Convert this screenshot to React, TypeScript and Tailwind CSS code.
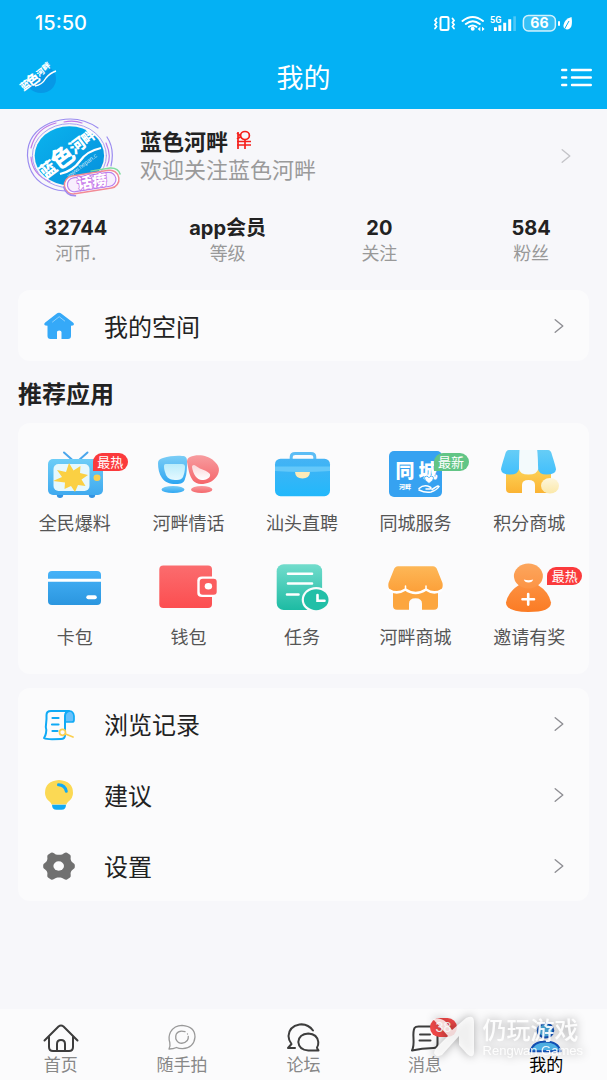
import type { ReactNode } from "react";

type Tile = {
  badge?: "最新" | "最热";
  icon: ReactNode;
  label: string;
};

type Row = {
  icon: ReactNode;
  label: string;
};

const stats = [
  { label: "河币.", value: "32744" },
  { label: "等级", value: "app会员" },
  { label: "关注", value: "20" },
  { label: "粉丝", value: "584" },
];

const tiles: Tile[] = [
  { badge: "最热", icon: <TvIcon />, label: "全民爆料" },
  { icon: <ChairsIcon />, label: "河畔情话" },
  { icon: <BriefcaseIcon />, label: "汕头直聘" },
  { badge: "最新", icon: <CityIcon />, label: "同城服务" },
  { icon: <PointsShopIcon />, label: "积分商城" },
  { icon: <CardIcon />, label: "卡包" },
  { icon: <WalletIcon />, label: "钱包" },
  { icon: <TaskIcon />, label: "任务" },
  { icon: <ShopIcon />, label: "河畔商城" },
  { badge: "最热", icon: <InviteIcon />, label: "邀请有奖" },
];

const rows: Row[] = [
  { icon: <HistoryIcon />, label: "浏览记录" },
  { icon: <BulbIcon />, label: "建议" },
  { icon: <GearIcon />, label: "设置" },
];

const tabs = [
  { icon: <TabHomeIcon />, label: "首页" },
  { icon: <TabSnapIcon />, label: "随手拍" },
  { icon: <TabForumIcon />, label: "论坛" },
  { count: 38, icon: <TabMessageIcon />, label: "消息" },
  { active: true, icon: <TabMeIcon />, label: "我的" },
];

export default function App(): ReactNode {
  return (
    <div className="relative flex min-h-screen flex-col bg-[#f7f7fa] font-['Noto_Sans_CJK_SC',sans-serif] text-[#222]">
      <Header />
      <main className="flex flex-col">
        <Profile />
        <Stats />
        <section className="mx-[18px] mt-[26px] rounded-xl bg-[#fbfbfc]">
          <ListRow row={{ icon: <HouseIcon />, label: "我的空间" }} />
        </section>
        <h2 className="mx-[18px] mt-[14px] text-2xl/9 font-bold">推荐应用</h2>
        <TileGrid />
        <section className="mx-[18px] mt-[14px] rounded-xl bg-[#fbfbfc]">
          {rows.map((row) => (
            <ListRow key={row.label} row={row} />
          ))}
        </section>
      </main>
      <TabBar />
    </div>
  );
}

function Header() {
  return (
    <header className="bg-[#04b1f4] text-white">
      <div className="flex h-[45px] items-center justify-between pr-[33px] pl-[35px]">
        <span className="font-['Inter',sans-serif] text-xl font-medium">
          15:50
        </span>
        <StatusIcons />
      </div>
      <div className="grid h-16 grid-cols-3 items-center px-[15px]">
        <a aria-label="蓝色河畔" href="#home">
          <SmallLogo />
        </a>
        <h1 className="text-center text-[27px]/9">我的</h1>
        <button aria-label="菜单" className="justify-self-end" type="button">
          <svg
            className="h-[19px] w-[31px]"
            fill="none"
            stroke="currentColor"
            strokeLinecap="round"
            strokeWidth="2.4"
            viewBox="0 0 31 19"
          >
            <path d="M1.2 2h4M1.2 9.5h4M1.2 17h4M11 2h18.8M11 9.5h18.8M11 17h18.8" />
          </svg>
        </button>
      </div>
    </header>
  );
}

function Profile() {
  return (
    <a className="flex items-start pt-[9px] pr-9 pl-[26px]" href="#profile">
      <Avatar />
      <div className="grow pt-2 pl-4">
        <div className="flex items-center gap-2">
          <span className="text-[22px]/7 font-bold">蓝色河畔</span>
          <svg
            className="h-5 w-4"
            fill="none"
            stroke="#f5201c"
            strokeWidth="1.7"
            viewBox="0 0 16 20"
          >
            <ellipse cx="9" cy="5.5" rx="4.4" ry="4" />
            <path d="M2 2v17M1 3l3 2.5M1 9l4-2.5M1 11.5h14M1 15h14M9 10v9" />
          </svg>
        </div>
        <div className="text-[22px]/7 text-[#9a9a9a]">欢迎关注蓝色河畔</div>
      </div>
      <Chevron className="mt-[30px] text-[#c4c4c8]" />
    </a>
  );
}

function Stats() {
  return (
    <ul className="mt-4 grid grid-cols-4 text-center">
      {stats.map((stat) => (
        <li className="flex flex-col" key={stat.label}>
          <span className="font-['Inter','Noto_Sans_CJK_SC',sans-serif] text-xl/6 font-bold">
            {stat.value}
          </span>
          <span className="text-lg/6 text-[#999]">{stat.label}</span>
        </li>
      ))}
    </ul>
  );
}

function ListRow({ row }: { row: Row }) {
  return (
    <a
      className="flex h-[71px] items-center gap-7 pr-[25px] pl-6 text-2xl"
      href="#row"
    >
      {row.icon}
      <span className="grow">{row.label}</span>
      <Chevron className="text-[#8e8e93]" />
    </a>
  );
}

function TileGrid() {
  return (
    <section className="mx-[18px] mt-3 grid grid-cols-5 gap-y-[30px] rounded-xl bg-[#fbfbfc] pt-[26px] pr-[3px] pb-[27px]">
      {tiles.map((tile) => (
        <a
          className="flex flex-col items-center gap-3"
          href="#app"
          key={tile.label}
        >
          <span className="relative">
            {tile.icon}
            {tile.badge && <Badge text={tile.badge} />}
          </span>
          <span className="text-lg/[22px] text-[#555]">{tile.label}</span>
        </a>
      ))}
    </section>
  );
}

function Badge({ text }: { text: "最新" | "最热" }) {
  const color = text === "最热" ? "bg-[#fb3a3c]" : "bg-[#62c586]";

  return (
    <span
      className={`absolute top-1 left-[50px] h-[18px] w-[35px] rounded-full rounded-bl-none text-center text-[13px]/[18px] text-white ${color}`}
    >
      {text}
    </span>
  );
}

function TabBar() {
  return (
    <nav className="relative mt-auto grid h-[71px] grid-cols-5 bg-[#fbfbfc] pt-[13px]">
      {tabs.map((tab) => (
        <a
          className="flex flex-col items-center"
          href="#tab"
          key={tab.label}
        >
          <span className="relative">
            {tab.icon}
            {tab.count && (
              <span className="absolute -top-1 left-[23px] h-[19px] w-[27px] rounded-full bg-[#f04848] text-center font-['Liberation_Sans',sans-serif] text-sm/[19px] text-white">
                {tab.count}
              </span>
            )}
          </span>
          <span
            className={`text-[17px]/5 ${tab.active ? "text-black" : "text-[#888]"}`}
          >
            {tab.label}
          </span>
        </a>
      ))}
      <Watermark />
    </nav>
  );
}

function Watermark() {
  return (
    <div className="pointer-events-none absolute top-[6px] right-6 flex items-center gap-2 text-white drop-shadow-[0_0_5px_rgba(0,0,0,0.4)]">
      <svg
        className="h-11 w-[42px]"
        fill="#fff"
        fillOpacity="0.8"
        viewBox="0 0 42 44"
      >
        <path d="M0 4q8-2 13 3l6 8L33 3q8-4 8 4v31q-1 6-7 1l-8-9v-9L9 40q-6 3-8-2 0-3 3-6l11-11z" />
      </svg>
      <div className="opacity-90">
        <div className="text-2xl/7 font-medium">仍玩游戏</div>
        <div className="font-['Liberation_Sans',sans-serif] text-[13px]/4">
          Rengwan Games
        </div>
      </div>
    </div>
  );
}

function Chevron({ className }: { className: string }) {
  return (
    <svg
      className={`h-4 w-[10px] shrink-0 ${className}`}
      fill="none"
      stroke="currentColor"
      strokeLinecap="round"
      strokeLinejoin="round"
      strokeWidth="1.4"
      viewBox="0 0 10 16"
    >
      <path d="M1.2 1.8 8.8 8l-7.6 6.2" />
    </svg>
  );
}

function StatusIcons() {
  return (
    <svg className="h-5 w-[142px]" fill="currentColor" viewBox="0 0 142 20">
      <g fill="none" stroke="currentColor" strokeLinecap="round">
        <rect height="13" rx="1.5" strokeWidth="2" width="8" x="8.5" y="4" />
        <path
          d="M4.5 5.5 3 7.5l1.5 2L3 11.5l1.5 2L3 15.5M20.5 5.5l1.5 2-1.5 2 1.5 2-1.5 2 1.5 2"
          strokeWidth="1.8"
        />
        <path
          d="M30.5 8q10-8 20.5 0M33.8 11q7-5.5 14 0M37 13.8q3.7-2.7 7.4 0"
          strokeWidth="2"
        />
      </g>
      <circle cx="40.7" cy="15.7" r="2" />
      <path d="m48.3 13.8-2.6 2.2 2.6 2.2zM50 13.8l2.6 2.2-2.6 2.2z" />
      <text
        fontFamily="Roboto, sans-serif"
        fontSize="9"
        fontWeight="700"
        x="58"
        y="9.5"
      >
        5G
      </text>
      <path d="M62 14.3h3v3.7h-3zM66.4 12.3h3V18h-3zM71.2 9.7h3V18h-3zM76.2 6.3h3V18h-3z" />
      <path d="M81.3 3.3h2.6V18h-2.6z" opacity="0.3" />
      <rect
        fill="#fff"
        fillOpacity="0.2"
        height="15.4"
        rx="5"
        stroke="#fff"
        strokeOpacity="0.8"
        strokeWidth="1.5"
        width="32"
        x="91.4"
        y="2.6"
      />
      <text
        fontFamily="Inter, sans-serif"
        fontSize="14"
        fontWeight="700"
        textAnchor="middle"
        x="107.4"
        y="15.4"
      >
        66
      </text>
      <rect height="5" rx="1" width="2" x="126" y="8" />
      <path d="M139.5 4q2 12-4.5 12.5-4-.5-3.5-4.5Q132.5 6 139.5 4z" />
      <path d="m132 17 5-9" stroke="#04b1f4" />
    </svg>
  );
}

function SmallLogo() {
  return (
    <svg className="h-9 w-[46px]" viewBox="-3 0 46 36">
      <ellipse cx="23" cy="20" fill="#0798e6" rx="15" ry="14" />
      <path d="M-3 0h46v3L2 28h-5z" fill="#04b1f4" />
      <g
        fill="#fff"
        fontFamily="Noto Sans CJK SC, sans-serif"
        fontWeight="900"
        textAnchor="middle"
        transform="rotate(-37 7 26)"
      >
        <text fontSize="10" x="7" y="30">
          蓝
        </text>
        <text fontSize="13" x="17" y="31">
          色
        </text>
        <text fontSize="8" x="27" y="28">
          河
        </text>
        <text fontSize="8" x="35" y="27">
          畔
        </text>
      </g>
      <path
        d="M17 27q7-1 11-8 4-5 10-7"
        fill="none"
        stroke="#fff"
        strokeWidth="1.4"
      />
    </svg>
  );
}

function Avatar() {
  return (
    <svg className="h-[82px] w-[98px] shrink-0" viewBox="0 0 98 82">
      <defs>
        <linearGradient id="avatar-fill" x1="0" x2="1" y1="0" y2="1">
          <stop stopColor="#0ab4ee" />
          <stop offset="1" stopColor="#068fdc" />
        </linearGradient>
      </defs>
      <ellipse
        cx="43.4"
        cy="37.7"
        fill="url(#avatar-fill)"
        rx="34.7"
        ry="29.5"
      />
      <g
        fill="#fff"
        fontFamily="Noto Sans CJK SC, sans-serif"
        fontWeight="900"
        textAnchor="middle"
        transform="rotate(-37 23 51)"
      >
        <text fontSize="17" x="22" y="57">
          蓝
        </text>
        <text fontSize="23" x="41" y="58">
          色
        </text>
        <text fontSize="16" x="60" y="55">
          河
        </text>
        <text fontSize="14" x="74" y="54">
          畔
        </text>
      </g>
      <text
        fill="#fff"
        fillOpacity="0.8"
        fontFamily="Liberation Sans, sans-serif"
        fontSize="6"
        transform="rotate(-37 43 60)"
        x="43"
        y="60"
      >
        www.hepan.c
      </text>
      <path
        d="M34 56q13-3 20-13t21-13"
        fill="none"
        stroke="#fff"
        strokeWidth="2.2"
      />
      <g fill="none" strokeLinecap="round">
        <path
          d="M72 10Q50-5 24 5 1 15 1.5 38 3 62 25 70q6 3 17 3M81 19q8 12 4 29"
          stroke="#9b8cf0"
          strokeWidth="1.2"
        />
        <path
          d="M5 30Q10 10 30 5m8-1q10-2 18 1M80 25q6 14 1 23M5 39q1 17 19 25"
          stroke="#c07be8"
          strokeWidth="1.2"
        />
        <ellipse
          cx="43.4"
          cy="37.7"
          rx="37"
          ry="32"
          stroke="#a9a1f2"
          strokeWidth="1"
        />
      </g>
      <g transform="rotate(-9 66 63)">
        <rect
          fill="#fff"
          height="18"
          rx="9"
          stroke="#f28b96"
          strokeWidth="1.5"
          width="55"
          x="38"
          y="55"
        />
        <rect
          fill="#f8effe"
          height="14"
          rx="7"
          stroke="#b982ef"
          strokeWidth="1.2"
          width="49"
          x="41"
          y="57"
        />
        <path
          d="M66 53h20q8 1 9 8"
          fill="none"
          stroke="#7fdc9f"
          strokeWidth="1.5"
        />
        <path
          d="M37 64q1 10 11 11"
          fill="none"
          stroke="#a18bf0"
          strokeWidth="1.5"
        />
        <text
          fill="#fff"
          fontFamily="Noto Sans CJK SC, sans-serif"
          fontSize="15"
          fontWeight="900"
          paintOrder="stroke"
          stroke="#c373e8"
          strokeWidth="1.5"
          textAnchor="middle"
          x="66"
          y="69"
        >
          话痨
        </text>
      </g>
    </svg>
  );
}

function TileSvg({ children }: { children: ReactNode }) {
  return (
    <svg className="h-[50px] w-16" fill="none" viewBox="0 0 64 50">
      {children}
    </svg>
  );
}

function Gradient({ from, id, to }: { from: string; id: string; to: string }) {
  return (
    <linearGradient id={id} x1="0" x2="0" y1="0" y2="1">
      <stop stopColor={from} />
      <stop offset="1" stopColor={to} />
    </linearGradient>
  );
}

function TvIcon() {
  return (
    <TileSvg>
      <defs>
        <Gradient from="#6ccdf7" id="tv" to="#3fa9ef" />
      </defs>
      <path
        d="m21 3.5 9 8M44.5 3.5l-9 8"
        stroke="#4aa6ec"
        strokeLinecap="round"
        strokeWidth="2"
      />
      <ellipse cx="17" cy="46" fill="#3293e2" rx="3.2" ry="3" />
      <ellipse cx="49" cy="46" fill="#3293e2" rx="3.2" ry="3" />
      <rect fill="url(#tv)" height="36" rx="5" width="55" x="5" y="10" />
      <rect fill="#e6f8fd" height="27" rx="5" width="36" x="10.5" y="15" />
      <path
        d="m26 14 4.5 7.5 7-4.5-.5 7 8 2-6.5 4.5 4 6.5-7.5-1-3 7-4-6-6.5 3 .5-6.5-12-1.5 9-4-5-7 9 2z"
        fill="#fbd043"
      />
      <ellipse cx="54" cy="28.7" fill="#f8cf4f" rx="3.5" ry="3.2" />
    </TileSvg>
  );
}

function ChairsIcon() {
  return (
    <TileSvg>
      <defs>
        <Gradient from="#7bcdf6" id="chair-a" to="#2da6f2" />
        <Gradient from="#f79c9f" id="chair-b" to="#f5666b" />
        <Gradient from="#b9ecfb" id="chair-c" to="#e4f8ff" />
        <Gradient from="#fad6d8" id="chair-d" to="#fff" />
      </defs>
      <ellipse cx="17" cy="40.5" fill="url(#chair-a)" rx="11.5" ry="3.6" />
      <ellipse cx="45.7" cy="40.5" fill="url(#chair-b)" rx="10.7" ry="3.6" />
      <path
        d="M34 8c7-3 18-2 24 4 6 5 6 10 3 15-4 6-10 8-16 8-7 0-10-5-12-12l-2-10c0-3 1-4 3-5z"
        fill="url(#chair-b)"
      />
      <path
        d="M36 18c0-2 2-3 4-1 5 4 11 4 14 8 1 4-4 6-8 6-5 0-9-6-10-13z"
        fill="url(#chair-d)"
      />
      <path
        d="M7 9c6-2 14-2.5 19-2 4 0 5 2 5 5 0 7 0 13-2 18-1 4-4 5-9 5-7 0-11-2-14-6S2 19 2 14c0-3 2-4 5-5z"
        fill="url(#chair-a)"
      />
      <path
        d="M10 15h16c2 0 3 1 3 3 0 4-1 7-2 10-1 2-3 3-6 3-6 0-9-1-11-5-1-3-2-6-2-8s0-3 2-3z"
        fill="url(#chair-c)"
      />
    </TileSvg>
  );
}

function BriefcaseIcon() {
  return (
    <TileSvg>
      <defs>
        <Gradient from="#45b3f4" id="bag" to="#22b8fb" />
      </defs>
      <path
        d="M21.2 11V8q0-3.5 4-3.5h15.6q4 0 4 3.5v3"
        stroke="#5cbdf5"
        strokeWidth="3"
      />
      <rect fill="url(#bag)" height="37.5" rx="5.5" width="55" x="5" y="9.7" />
      <path d="M5 17.5h55V22q-14 1-27.5 1T5 22z" fill="#64c8f9" />
      <path d="M25 23h15q-.5 6.5-7.5 6.5T25 23z" fill="#fdebb8" />
    </TileSvg>
  );
}

function CityIcon() {
  return (
    <TileSvg>
      <rect fill="#36a2f1" height="46" rx="5" width="53" x="5" y="2" />
      <g
        fill="#fff"
        fontFamily="Noto Sans CJK SC, sans-serif"
        fontWeight="900"
      >
        <text fontSize="19" x="11.5" y="28.5">
          同
        </text>
        <text fontSize="19" x="34.5" y="28.5">
          城
        </text>
        <text fontSize="6" x="15" y="40">
          河畔
        </text>
      </g>
      <path
        d="M45 34.5q-4.5-3-4.5-5.3 0-2 2-2 1.7 0 2.5 1.5 1-1.5 2.5-1.5 2 0 2 2 0 2.3-4.5 5.3z"
        fill="#fff"
        stroke="#36a2f1"
        strokeWidth="0.8"
      />
      <path
        d="M35 39.5q5-4.5 11-1.5 2 1 0 2h-4M35 41q6 3 12 2 6-2 8-5.5-1-1-3 .5l-4 2.5"
        stroke="#fff"
        strokeLinecap="round"
        strokeWidth="1.5"
      />
    </TileSvg>
  );
}

function PointsShopIcon() {
  return (
    <TileSvg>
      <defs>
        <Gradient from="#66cdf6" id="awning" to="#42bffc" />
        <Gradient from="#fcd257" id="wall" to="#fbb333" />
        <Gradient from="#fdf6dc" id="coin" to="#fbe8a9" />
      </defs>
      <path
        d="M9 20h45v24H38v-8q0-5-6.5-5T25 36v8H13q-4 0-4-4z"
        fill="url(#wall)"
      />
      <path
        d="M12 1h11l-1 19q-1 5.5-8.5 5.5-9 0-9.5-5 0-2 4-14.5 1-5 4-5zM40 1h11q3 0 4 5 4 12.5 4 14.5-.5 5-9.5 5-7.5 0-8.5-5.5z"
        fill="url(#awning)"
      />
      <path d="M22.5 1h17.7l1 19q-1 5.5-9.7 5.5T22 20z" fill="#f3fafc" />
      <ellipse cx="53" cy="36.7" fill="url(#coin)" rx="9" ry="7.8" />
    </TileSvg>
  );
}

function CardIcon() {
  return (
    <TileSvg>
      <defs>
        <Gradient from="#46b2f8" id="card" to="#2b96df" />
      </defs>
      <rect fill="url(#card)" height="34" rx="4" width="53" x="5" y="8" />
      <path d="M5 15.8h53v3H5z" fill="#fff" />
      <rect fill="#fff" height="4" rx="2" width="10.5" x="43.3" y="32.2" />
    </TileSvg>
  );
}

function WalletIcon() {
  return (
    <TileSvg>
      <defs>
        <Gradient from="#fb6c6e" id="wallet" to="#fc4e50" />
      </defs>
      <rect
        fill="url(#wallet)"
        height="42.5"
        rx="4"
        width="52.7"
        x="3.3"
        y="2.6"
      />
      <path d="M59 13.5H46q-4.7 0-4.7 4V30q0 4 4.7 4h13z" fill="#fff" />
      <rect fill="#fb5d5f" height="16" rx="3" width="17" x="43.7" y="15.7" />
      <ellipse cx="52.4" cy="23.3" fill="#fff" rx="3.7" ry="3.2" />
    </TileSvg>
  );
}

function TaskIcon() {
  return (
    <TileSvg>
      <defs>
        <Gradient from="#72dccc" id="task" to="#1dbba3" />
      </defs>
      <rect
        fill="url(#task)"
        height="45.7"
        rx="7"
        width="45.4"
        x="6.7"
        y="1.3"
      />
      <path
        d="M18 10.7h24M18 20.5h24M17 31.5h11.5"
        stroke="#fff"
        strokeLinecap="round"
        strokeWidth="2.6"
      />
      <ellipse cx="46.2" cy="36.7" fill="#fbfbfc" rx="14.5" ry="12.8" />
      <ellipse cx="46.2" cy="36.7" fill="#22bfa7" rx="12.3" ry="10.5" />
      <path
        d="M47.5 32v5.8h7"
        stroke="#fff"
        strokeLinecap="round"
        strokeWidth="2.6"
      />
    </TileSvg>
  );
}

function ShopIcon() {
  return (
    <TileSvg>
      <defs>
        <Gradient from="#fdb757" id="shop" to="#fc9f38" />
      </defs>
      <path
        d="M9 24h45v19q0 3.7-4 3.7H38v-6q0-5.5-6.5-5.5T25 40.7v6H13q-4 0-4-3.7z"
        fill="#fca63f"
      />
      <path
        d="M14 3.3h35q3 0 4.3 3.7L58.5 20q1 5-2 7-6 4-14.5-1-5 4-10.5 4T21 26q-8.5 5-14.5 1-3-2-2-7L9.7 7Q11 3.3 14 3.3z"
        fill="url(#shop)"
      />
      <path
        d="M5 27q8 5 16.5-.5 10 7 20.5 0Q50 32 58 27"
        stroke="#fff"
        strokeLinejoin="round"
        strokeWidth="2.5"
      />
      <path
        d="M21.5 26.5V23M42 26.5V23"
        stroke="#fff"
        strokeLinecap="round"
        strokeWidth="1.5"
      />
    </TileSvg>
  );
}

function InviteIcon() {
  return (
    <TileSvg>
      <defs>
        <Gradient from="#fca65d" id="invite-head" to="#fc9445" />
        <Gradient from="#fc9040" id="invite-body" to="#fb7b24" />
      </defs>
      <path
        d="M22 22h19q11 7 13 17.5 0 9.5-22.5 9.5T9 39.5Q11 29 22 22z"
        fill="url(#invite-body)"
      />
      <ellipse
        cx="31.4"
        cy="13"
        fill="url(#invite-head)"
        rx="14.5"
        ry="12.5"
      />
      <path d="M26.8 16.5q4.7 1.3 9.4 0-.8 3-4.7 3t-4.7-3z" fill="#fff" />
      <path
        d="M25.5 36.3H37M31.2 31v10.6"
        stroke="#fff"
        strokeLinecap="round"
        strokeWidth="2.6"
      />
    </TileSvg>
  );
}

function RowSvg({ children }: { children: ReactNode }) {
  return (
    <svg className="size-[34px] shrink-0" fill="none" viewBox="0 0 34 34">
      {children}
    </svg>
  );
}

function HouseIcon() {
  return (
    <RowSvg>
      <path
        d="M17 3.7q1.5 0 2.5 1L31 13.5q1.5 1.3.7 2.5-.5.7-2.7.7V27q0 3-3 3h-6.5v-7q0-1.5-2.3-1.5T15 23v7H8.5q-3 0-3-3V16.7q-2.5 0-3-.7-.8-1.2.7-2.5L14.5 4.7q1-1 2.5-1z"
        fill="#35a9f8"
      />
      <path
        d="m10.5 13 6.7-5.3 5.5 4.3"
        stroke="#a5dafc"
        strokeLinecap="round"
        strokeWidth="0.8"
      />
    </RowSvg>
  );
}

function HistoryIcon() {
  return (
    <RowSvg>
      <path
        d="M22.5 15V9q0-5 4.5-5t5 5v4q0 2-2 2z"
        fill="#69c1fb"
        stroke="#10aaf5"
        strokeWidth="1.7"
      />
      <path
        d="M27 4H9Q4.5 4 4.5 8v4L3.8 20q1 3 .2 6-.5 3-2 5 2 1.3 8 1.3l9-.3q4 0 4-4V9q0-4 4-5z"
        fill="#fbfbfc"
        stroke="#10aaf5"
        strokeLinejoin="round"
        strokeWidth="2"
      />
      <path
        d="M10.5 11h6M10 17.5h6.5M10.5 24h5"
        stroke="#10aaf5"
        strokeLinecap="round"
        strokeWidth="2.2"
      />
      <circle
        cx="20.5"
        cy="25.3"
        fill="#fbfbfc"
        r="3"
        stroke="#fbcf4e"
        strokeWidth="1.7"
      />
      <path
        d="m23.5 27 7.5 3"
        stroke="#fbcf4e"
        strokeLinecap="round"
        strokeWidth="1.8"
      />
    </RowSvg>
  );
}

function BulbIcon() {
  return (
    <RowSvg>
      <path
        d="M17 2q14 1 14 13 0 5-4.5 8.5-1.8 1.5-2 3h-15q-.2-1.5-2-3Q3 20 3 15 3 3 17 2z"
        fill="#fbd954"
      />
      <path d="M10 26.7h14q0 5-4.5 5h-5q-4.5 0-4.5-5z" fill="#10aaf5" />
      <path
        d="M16.5 6.7q6.5.3 7.8 6.5"
        stroke="#10aaf5"
        strokeLinecap="round"
        strokeWidth="3"
      />
    </RowSvg>
  );
}

function GearIcon() {
  return (
    <RowSvg>
      <path
        d="M9 3.7q1.5-.5 3 .5 1.8 1.5 3.5 1.5h3q1.5 0 3.5-1.5 1.5-1 3-.5l3 2q1 1 .7 2.3-.5 2.5.5 4 .6 1.2 2 2 1.6.8 1.6 2v2.3q0 1.2-1.6 2-1.4.8-2 2-1 1.5-.5 4 .3 1.3-.7 2.3l-3 2q-1.5.5-3-.5-2-1.5-3.5-1.5h-3q-1.5 0-3.5 1.5-1.5 1-3 .5l-3-2q-1-1-.7-2.3.5-2.5-.5-4-.6-1.2-2-2-1.6-.8-1.6-2V16q0-1.2 1.6-2 1.4-.8 2-2 1-1.5.5-4Q5 6.700 6 5.7z"
        fill="#707070"
      />
      <ellipse cx="16.7" cy="17" fill="#fbfbfc" rx="5.3" ry="4.7" />
    </RowSvg>
  );
}

function TabSvg({ children }: { children: ReactNode }) {
  return (
    <svg
      className="h-8 w-9"
      fill="none"
      stroke="#3d3d3d"
      strokeLinecap="round"
      strokeLinejoin="round"
      strokeWidth="2"
      viewBox="0 0 36 32"
    >
      {children}
    </svg>
  );
}

function TabHomeIcon() {
  return (
    <TabSvg>
      <path d="M1.5 18.5 15.5 4.5q2.5-2 5 0l14 14" />
      <path d="M6 15v10q0 4 4 4h16q4 0 4-4V15" />
      <path d="M14 29v-7q0-4 4-4t4 4v7" />
    </TabSvg>
  );
}

function TabSnapIcon() {
  return (
    <TabSvg>
      <g stroke="#999" strokeWidth="1.3">
        <path d="M5 27q1.5-3 .8-6.5Q4 15 6.5 10q4-6.7 11.5-6.700 13 1 13 11.700Q30 26 18.5 26.700q-4 0-6-1.200-3 1.500-7.500 1.500z" />
        <path d="M21 9.7q-6-2-8.7 2.3-2 5 2 8.3 5 2.500 9-1.800 1.200-2 1-4" />
        <path d="M23.5 12v.1" />
      </g>
    </TabSvg>
  );
}

function TabForumIcon() {
  return (
    <TabSvg>
      <path d="M28 8.5Q23 1.5 14.5 2.5 4 4.5 3.5 14q0 4 3 8L3 26h7" />
      <path d="M33.5 28.5q-1.3-1.5-1.5-3 1.5-2 1.3-5.5-1-8-10-8.500-9.300.5-10 8.500.7 8 10 8.500z" />
    </TabSvg>
  );
}

function TabMessageIcon() {
  return (
    <TabSvg>
      <path d="M5 28.5q2-4 1.5-12Q6 9 7.5 6q1-1.5 4-1.5h15q4 0 4 4V22q0 4-4 4-12 .3-21.500 2.500z" />
      <path d="M13 12.5h10M12.5 18.5h11" />
    </TabSvg>
  );
}

function TabMeIcon() {
  return (
    <TabSvg>
      <g fill="#54bdf5" stroke="#1556c0">
        <ellipse cx="17.5" cy="8.5" rx="7.8" ry="7" />
        <path d="M2.5 29.3Q5 19.5 17.5 19.5T32.5 29.3z" />
      </g>
    </TabSvg>
  );
}
